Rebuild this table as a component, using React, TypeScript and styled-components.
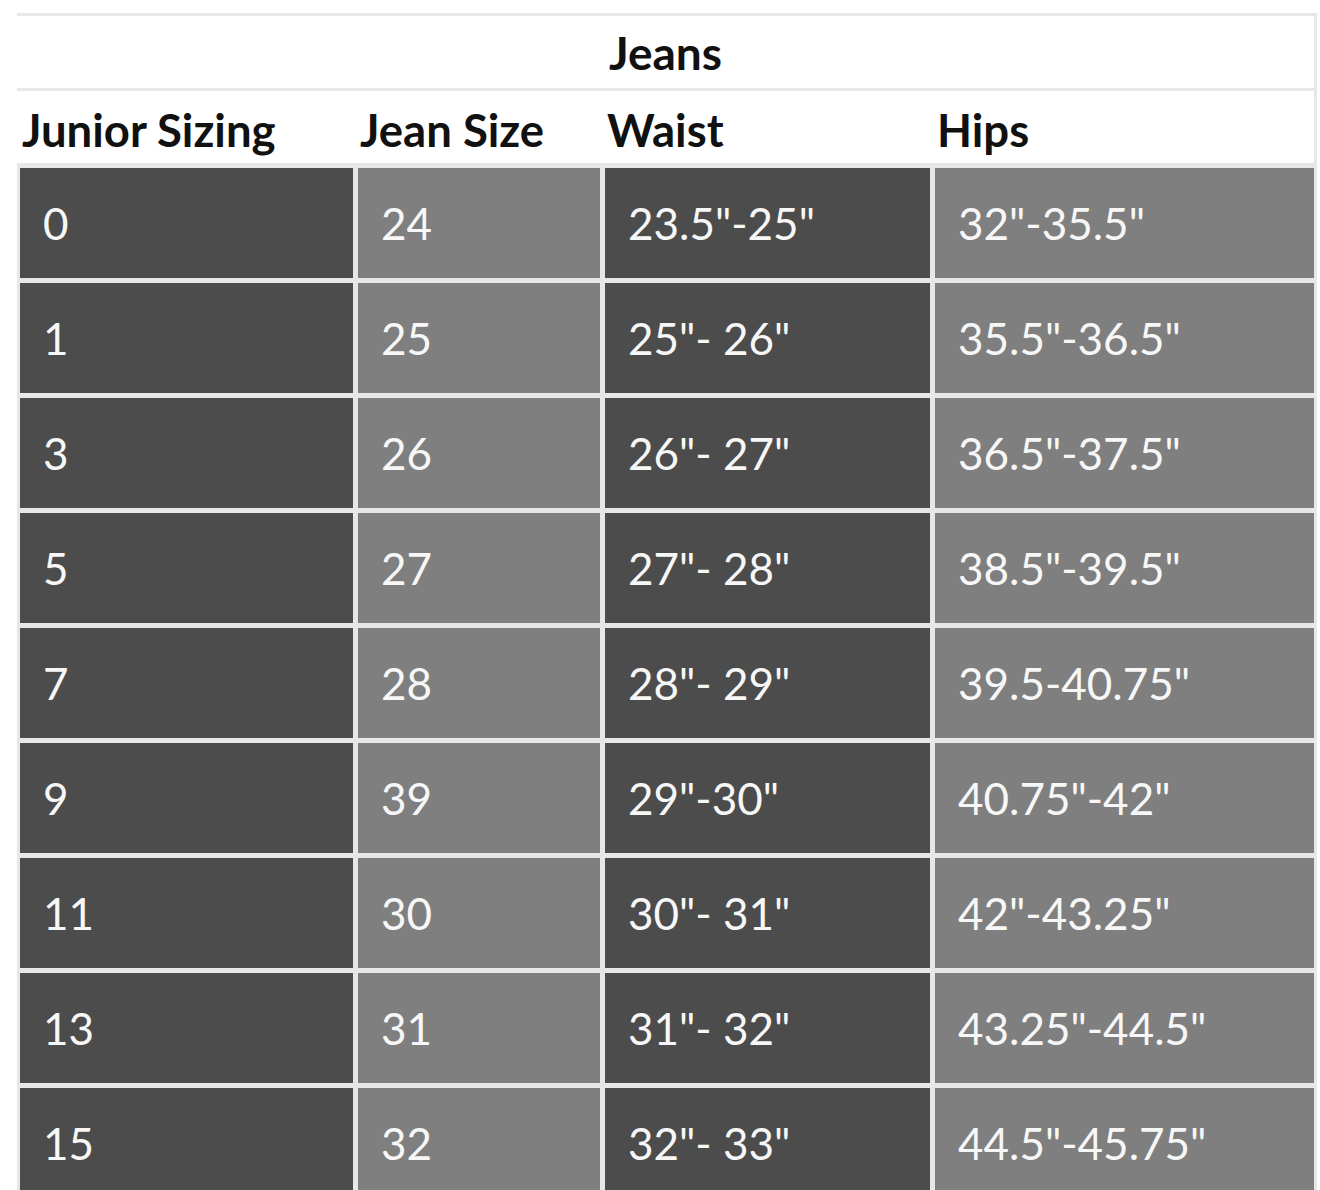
import styled, { createGlobalStyle } from 'styled-components'

const GlobalStyle = createGlobalStyle`
    body {
        margin: 0;
        background: #ffffff;
        font-family: Lato, "Open Sans", "Liberation Sans", sans-serif;
    }
`

const Wrapper = styled.div`
    width: 1300px;
    margin-left: 17px;
    padding-top: 13px;
`

const TitleRow = styled.div`
    height: 72px;
    display: flex;
    align-items: center;
    justify-content: center;
    border-top: 3px solid #e7e7e7;
    border-bottom: 3px solid #e7e7e7;
    border-right: 3px solid #e7e7e7;
    font-size: 46px;
    font-weight: 700;
    color: #111;
`

const HeaderRow = styled.div`
    height: 72px;
    display: grid;
    grid-template-columns: 338px 247px 330px 1fr;
    align-items: center;
    padding-left: 4px;
    border-right: 3px solid #e7e7e7;
    border-bottom: 4px solid #e7e7e7;
`

const HeaderCell = styled.div`
    font-size: 45.5px;
    font-weight: 700;
    color: #111;
    padding-left: 1px;
    padding-top: 4px;
`

const DataGrid = styled.div`
    display: grid;
    grid-template-columns: 333px 242px 325px 379px;
    column-gap: 5px;
    row-gap: 5px;
    padding: 1px 3px 0 3px;
    background: #e7e7e7;
`

const Cell = styled.div<{ $light?: boolean }>`
    height: 110px;
    display: flex;
    align-items: center;
    padding-left: 23px;
    background: ${p => (p.$light ? '#7f7f7f' : '#4c4c4c')};
    color: #f7f7f7;
    font-size: 44px;
    font-weight: 400;
`

const rows = [
    ['0', '24', '23.5"-25"', '32"-35.5"'],
    ['1', '25', '25"- 26"', '35.5"-36.5"'],
    ['3', '26', '26"- 27"', '36.5"-37.5"'],
    ['5', '27', '27"- 28"', '38.5"-39.5"'],
    ['7', '28', '28"- 29"', '39.5-40.75"'],
    ['9', '39', '29"-30"', '40.75"-42"'],
    ['11', '30', '30"- 31"', '42"-43.25"'],
    ['13', '31', '31"- 32"', '43.25"-44.5"'],
    ['15', '32', '32"- 33"', '44.5"-45.75"'],
]

export default function App() {
    return (
        <>
            <GlobalStyle />
            <Wrapper>
                <TitleRow>Jeans</TitleRow>
                <HeaderRow>
                    <HeaderCell>Junior Sizing</HeaderCell>
                    <HeaderCell>Jean Size</HeaderCell>
                    <HeaderCell>Waist</HeaderCell>
                    <HeaderCell>Hips</HeaderCell>
                </HeaderRow>
                <DataGrid>
                    {rows.map(r =>
                        r.map((v, i) => (
                            <Cell key={r[0] + '-' + i} $light={i % 2 === 1}>{v}</Cell>
                        ))
                    )}
                </DataGrid>
            </Wrapper>
        </>
    )
}
